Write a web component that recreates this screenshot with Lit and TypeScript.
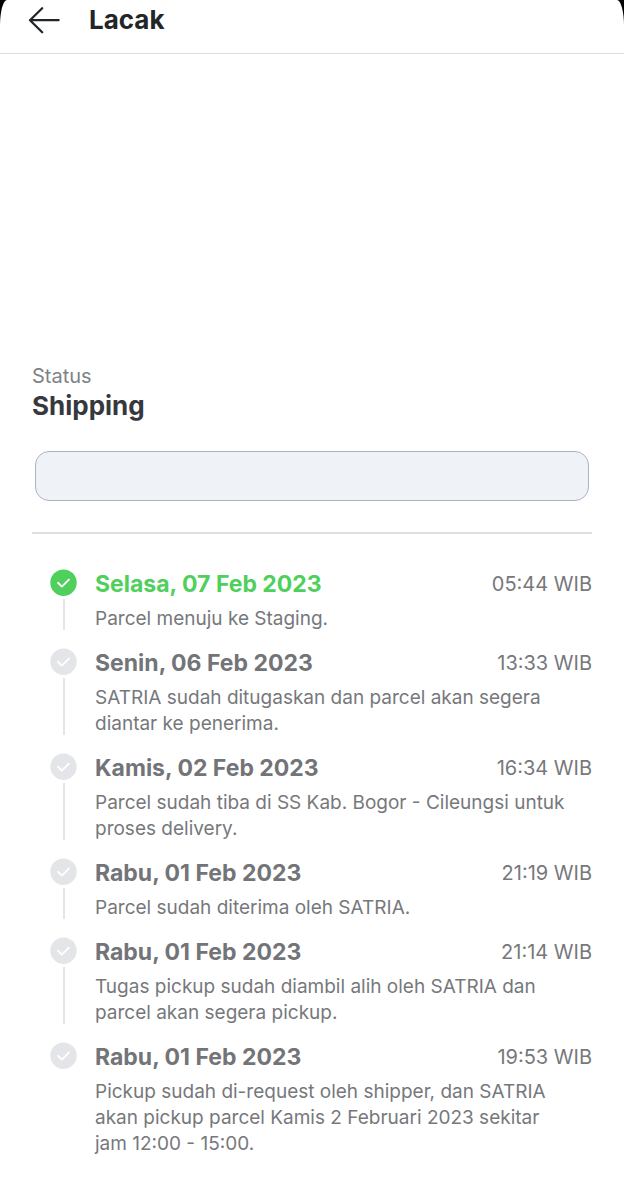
import { LitElement, html, css } from "lit";
import { customElement, property } from "lit/decorators.js";

interface TrackEvent {
  date: string;
  time: string;
  text: string;
}

const EVENTS: TrackEvent[] = [
  { date: "Selasa, 07 Feb 2023", time: "05:44 WIB", text: "Parcel menuju ke Staging." },
  { date: "Senin, 06 Feb 2023", time: "13:33 WIB", text: "SATRIA sudah ditugaskan dan parcel akan segera diantar ke penerima." },
  { date: "Kamis, 02 Feb 2023", time: "16:34 WIB", text: "Parcel sudah tiba di SS Kab. Bogor - Cileungsi untuk proses delivery." },
  { date: "Rabu, 01 Feb 2023", time: "21:19 WIB", text: "Parcel sudah diterima oleh SATRIA." },
  { date: "Rabu, 01 Feb 2023", time: "21:14 WIB", text: "Tugas pickup sudah diambil alih oleh SATRIA dan parcel akan segera pickup." },
  { date: "Rabu, 01 Feb 2023", time: "19:53 WIB", text: "Pickup sudah di-request oleh shipper, dan SATRIA akan pickup parcel Kamis 2 Februari 2023 sekitar jam 12:00 - 15:00." },
];

@customElement("track-item")
export class TrackItem extends LitElement {
  @property({ attribute: false }) event!: TrackEvent;
  @property({ type: Boolean, reflect: true }) current = false;
  @property({ type: Boolean, reflect: true }) last = false;

  static styles = css`
    :host {
      display: grid;
      grid-template-columns: 27px 1fr;
      column-gap: 18px;
      color: #76787c;
    }
    .rail {
      display: flex;
      flex-direction: column;
      align-items: center;
      gap: 3px;
      padding: 1px 0 17px;
    }
    .mark {
      display: block;
      flex: none;
      width: 27px;
      height: 27px;
      color: #e4e5e8;
    }
    .line {
      flex: 1;
      width: 2px;
      background: #e4e5e8;
    }
    .body {
      padding-bottom: 15px;
    }
    .head {
      display: flex;
      justify-content: space-between;
      align-items: center;
      line-height: 32px;
      margin-bottom: 6px;
    }
    .date {
      margin: 0;
      font-size: 23px;
      font-weight: 700;
      color: #727478;
    }
    .time {
      font-size: 20px;
    }
    .text {
      margin: 0;
      padding-right: 20px;
      font-size: 19px;
      line-height: 26px;
    }
    :host([current]) .mark,
    :host([current]) .date {
      color: #4fcf5c;
    }
    :host([last]) .line {
      display: none;
    }
  `;

  render() {
    return html`
      <div class="rail">
        <svg class="mark" viewBox="0 0 27 27" aria-hidden="true">
          <circle cx="13.5" cy="13.7" r="13.2" fill="currentColor" />
          <path d="M8 13.8l3.9 3.8 7-7" fill="none" stroke="#fff" stroke-width="1.9" stroke-linecap="round" stroke-linejoin="round" />
        </svg>
        <span class="line"></span>
      </div>
      <div class="body">
        <div class="head">
          <h3 class="date">${this.event.date}</h3>
          <time class="time">${this.event.time}</time>
        </div>
        <p class="text">${this.event.text}</p>
      </div>
    `;
  }
}

@customElement("app-root")
export class AppRoot extends LitElement {
  static styles = css`
    :host {
      display: block;
      min-height: 100vh;
      background: #000;
      font-family: Inter, "Liberation Sans", sans-serif;
      font-weight: 400;
    }
    .screen {
      min-height: 100vh;
      background: #fff;
      border-radius: 7px 7px 0 0 / 26px 26px 0 0;
    }
    .bar {
      display: flex;
      align-items: center;
      gap: 28px;
      height: 40px;
      padding: 0 28px 13px;
      border-bottom: 1px solid #d9dfe8;
    }
    .back {
      display: block;
      padding: 0;
      border: 0;
      background: none;
      color: #232629;
    }
    .back svg {
      display: block;
    }
    .title {
      margin: 0;
      font-size: 26px;
      line-height: 40px;
      font-weight: 700;
      color: #232629;
    }
    .content {
      padding: 309px 32px 28px;
    }
    .label {
      display: block;
      font-size: 20px;
      line-height: 26px;
      color: #808286;
    }
    .status {
      margin: 0;
      font-size: 26px;
      line-height: 34px;
      font-weight: 700;
      color: #36383d;
    }
    .field {
      display: flex;
      margin: 28px 3px 31px;
    }
    .note {
      flex: 1;
      min-width: 0;
      height: 50px;
      box-sizing: border-box;
      padding: 0 16px;
      border: 1px solid #abb4c4;
      border-radius: 14px;
      background: #eff3f8;
      font: inherit;
      font-size: 20px;
    }
    .list {
      border-top: 2px solid #dcdfe2;
      padding: 34px 0 0 18px;
    }
  `;

  render() {
    return html`
      <main class="screen">
        <header class="bar">
          <button class="back" aria-label="Kembali">
            <svg width="33" height="28" viewBox="0 0 33 28" fill="none" stroke="currentColor" stroke-width="2.3" stroke-linecap="round" stroke-linejoin="round">
              <path d="M14.2 2.2L2 14.2l12.2 12M2 14.2h28.6" />
            </svg>
          </button>
          <h1 class="title">Lacak</h1>
        </header>
        <section class="content">
          <label class="label" for="note">Status</label>
          <h2 class="status">Shipping</h2>
          <div class="field"><input class="note" id="note" type="text" readonly /></div>
          <div class="list">
            ${EVENTS.map(
              (e, i) => html`<track-item .event=${e} ?current=${i === 0} ?last=${i === EVENTS.length - 1}></track-item>`
            )}
          </div>
        </section>
      </main>
    `;
  }
}
